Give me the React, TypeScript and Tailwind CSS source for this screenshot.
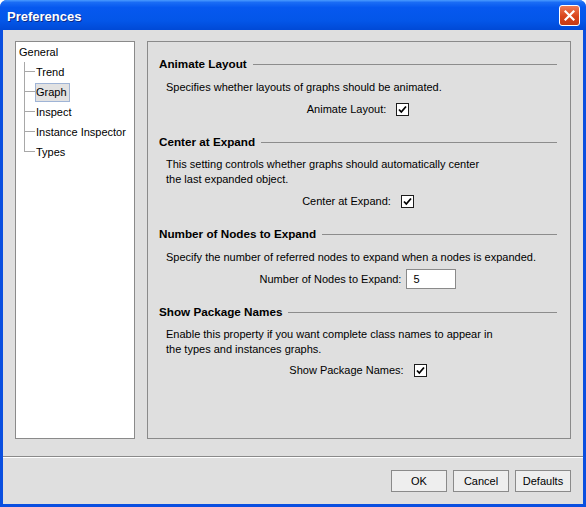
import React from "react";

const font = { fontFamily: '"Liberation Sans", Arial, sans-serif' };

function Check() {
  return (
    <span className="flex h-[13px] w-[13px] items-center justify-center border border-[#1c1c1c] bg-white">
      <svg width="9" height="9" viewBox="0 0 9 9">
        <path d="M1 4.5 L3.3 7 L8 1.5" fill="none" stroke="#000" strokeWidth="1.8" />
      </svg>
    </span>
  );
}

function Heading({ children }: { children: React.ReactNode }) {
  return (
    <div className="flex h-[16px] items-center gap-[6px]">
      <span className="whitespace-nowrap text-[11.7px] font-bold leading-none">{children}</span>
      <span className="h-px flex-1 bg-[#8c8c8c]" />
    </div>
  );
}

function TreeItem({ label, last, selected }: { label: string; last?: boolean; selected?: boolean }) {
  return (
    <div className="flex h-[20px] items-stretch">
      <div className="flex w-[11px] flex-col">
        <div className="h-[10px] border-b border-l border-[#a8a8a8]" />
        <div className={"h-[10px] " + (last ? "" : "border-l border-[#a8a8a8]")} />
      </div>
      <div className="flex items-center">
        <span
          className={
            "leading-[17px] " +
            (selected ? "border border-[#9fb4d6] bg-[#e2e2e2] pr-[2px]" : "border border-transparent")
          }
        >
          {label}
        </span>
      </div>
    </div>
  );
}

export default function App() {
  const tree = ["Trend", "Graph", "Inspect", "Instance Inspector", "Types"];
  return (
    <div className="h-[507px] w-[586px] bg-white text-[11px] text-black" style={font}>
      <div className="flex h-full flex-col overflow-hidden rounded-t-[7px] bg-[#0a4fe0]">
        {/* title bar */}
        <div className="flex h-[30px] items-center justify-between bg-[linear-gradient(to_bottom,#4a9bff_0%,#1a6cf5_8%,#0658ef_25%,#0356e8_70%,#0049d6_100%)] pl-[7px] pr-[6px]">
          <span className="pt-[3px] text-[13px] font-bold text-white [text-shadow:1px_1px_0_#0a2a8a]">Preferences</span>
          <button className="flex h-[21px] w-[21px] items-center justify-center rounded-[3px] border border-white bg-[linear-gradient(to_bottom,#ee7a55,#d9451c_55%,#c53a14)]">
            <svg width="11" height="11" viewBox="0 0 11 11">
              <path d="M1.5 1.5 L9.5 9.5 M9.5 1.5 L1.5 9.5" stroke="#fff" strokeWidth="2.2" strokeLinecap="square" />
            </svg>
          </button>
        </div>

        {/* body */}
        <div className="mx-[3px] mb-[3px] flex flex-1 flex-col bg-[#dfdfdf]">
          <div className="mt-[11px] flex h-[398px] gap-[12px] px-[12px]">
            {/* tree */}
            <div className="w-[120px] border border-[#8a8a8a] bg-white pl-[3px]">
              <div className="flex h-[20px] items-center">General</div>
              <div className="ml-[5px]">
                {tree.map((t, i) => (
                  <TreeItem key={t} label={t} last={i === tree.length - 1} selected={t === "Graph"} />
                ))}
              </div>
            </div>

            {/* settings */}
            <div className="flex-1 border border-[#8a8a8a] pl-[11px] pr-[13px] pt-[14px]">
              <Heading>Animate Layout</Heading>
              <div className="mt-[8px] pl-[7px] leading-[15px]">Specifies whether layouts of graphs should be animated.</div>
              <div className="mt-[7px] flex h-[15px] items-center justify-center gap-[10px]">
                <span>Animate Layout:</span>
                <Check />
              </div>

              <div className="mt-[17px]">
                <Heading>Center at Expand</Heading>
              </div>
              <div className="mt-[7px] pl-[7px] leading-[15px]">
                This setting controls whether graphs should automatically center
                <br />
                the last expanded object.
              </div>
              <div className="mt-[7px] flex h-[15px] items-center justify-center gap-[10px]">
                <span>Center at Expand:</span>
                <Check />
              </div>

              <div className="mt-[17px]">
                <Heading>Number of Nodes to Expand</Heading>
              </div>
              <div className="mt-[8px] pl-[7px] leading-[15px]">
                Specify the number of referred nodes to expand when a nodes is expanded.
              </div>
              <div className="mt-[4px] flex h-[20px] items-center justify-center gap-[5px]">
                <span>Number of Nodes to Expand:</span>
                <div className="flex h-[20px] w-[50px] items-center border border-[#8a8a8a] bg-white pl-[6px]">5</div>
              </div>

              <div className="mt-[15px]">
                <Heading>Show Package Names</Heading>
              </div>
              <div className="mt-[7px] pl-[7px] leading-[15px]">
                Enable this property if you want complete class names to appear in
                <br />
                the types and instances graphs.
              </div>
              <div className="mt-[6px] flex h-[15px] items-center justify-center gap-[10px]">
                <span>Show Package Names:</span>
                <Check />
              </div>
            </div>
          </div>

          {/* separator */}
          <div className="mt-[17px] h-px bg-[#8a8a8a]" />
          <div className="h-px bg-white" />

          {/* buttons */}
          <div className="mt-[12px] flex justify-end gap-[6px] pr-[12px]">
            {["OK", "Cancel", "Defaults"].map((b) => (
              <button key={b} className="h-[22px] w-[56px] border border-[#8a8a8a] bg-[#eeeeee] text-[11px]">
                {b}
              </button>
            ))}
          </div>
        </div>
      </div>
    </div>
  );
}
